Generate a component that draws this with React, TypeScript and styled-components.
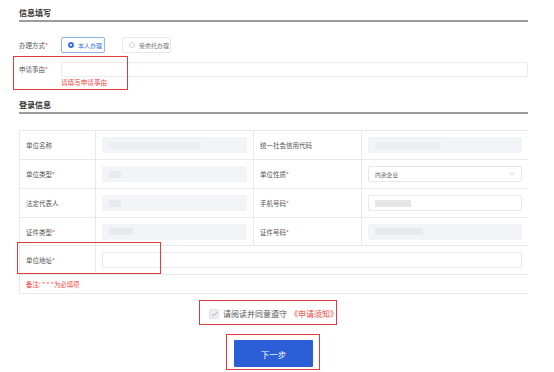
import styled, { createGlobalStyle } from "styled-components";

const GlobalStyle = createGlobalStyle`
	html, body {
		margin: 0;
		padding: 0;
		background: #fff;
		font-family: "Noto Sans CJK SC", "Noto Sans", sans-serif;
	}
`;

const Page = styled.div`
	position: relative;
	width: 554px;
	height: 372px;
	box-sizing: border-box;
	padding: 0 26px 0 19px;
	overflow: hidden;
`;
const SectionTitle = styled.div<{ $top: number }>`
	padding-top: ${(p) => p.$top}px;
	padding-bottom: 1px;
	line-height: 12px;
	font-size: 8px;
	font-weight: 700;
	color: #333;
	border-bottom: 2px solid #9b9b9b;
`;
const FormRow = styled.div<{ $mt: number }>`
	display: flex;
	align-items: center;
	margin-top: ${(p) => p.$mt}px;
	height: 16px;
`;
const FieldLabel = styled.div`
	width: 42px;
	flex: none;
	font-size: 6.5px;
	color: #555;
`;
const Star = styled.span`
	color: #f0443a;
`;
const RadioOption = styled.div<{ $active?: boolean; $w: number; $ml?: number }>`
	display: flex;
	align-items: center;
	gap: 4px;
	box-sizing: border-box;
	width: ${(p) => p.$w}px;
	height: 16px;
	margin-left: ${(p) => p.$ml || 0}px;
	padding-left: 6px;
	border: 1px solid ${(p) => (p.$active ? "#8fb2f6" : "#e8e8e8")};
	border-radius: 2px;
	font-size: 6px;
	color: ${(p) => (p.$active ? "#3a72e6" : "#777")};
`;
const RadioDot = styled.span<{ $active?: boolean }>`
	box-sizing: border-box;
	width: 6px;
	height: 6px;
	border-radius: 50%;
	border: ${(p) => (p.$active ? "2px solid #3a72e6" : "1px solid #d6d6d6")};
	background: #fff;
`;
const TextInput = styled.div`
	flex: 1;
	height: 15px;
	box-sizing: border-box;
	border: 1px solid #ececec;
	border-radius: 2px;
`;
const ErrorText = styled.div`
	margin-left: 42px;
	margin-top: 1px;
	line-height: 8px;
	font-size: 6.6px;
	color: #f0443a;
`;
const Table = styled.div`
	margin-top: 16px;
	display: grid;
	grid-template-columns: 75px 157px 107px 166px;
	grid-template-rows: 28px 28px 28px 27px 28px 18px;
	gap: 1px;
	background: #e9e9e9;
	border: 1px solid #e9e9e9;
`;
const LabelCell = styled.div`
	background: #fff;
	display: flex;
	align-items: center;
	padding-left: 6px;
	font-size: 6.5px;
	color: #555;
`;
const ValueCell = styled.div<{ $span?: number }>`
	background: #fff;
	display: flex;
	align-items: center;
	padding: 0 6px;
	grid-column: span ${(p) => p.$span || 1};
`;
const Field = styled.div<{ $disabled?: boolean }>`
	position: relative;
	flex: 1;
	height: 16px;
	box-sizing: border-box;
	display: flex;
	align-items: center;
	justify-content: space-between;
	padding: 0 6px;
	border-radius: 2px;
	border: 1px solid ${(p) => (p.$disabled ? "#f2f3f6" : "#e8e8e8")};
	background: ${(p) => (p.$disabled ? "#f3f4f7" : "#fff")};
	font-size: 5.8px;
	color: #666;
`;
const Mask = styled.span<{ $w: number; $tone?: string }>`
	width: ${(p) => p.$w}px;
	height: 7px;
	background: ${(p) => p.$tone || "#e7e9ee"};
	filter: blur(0.6px);
`;
const NoteCell = styled.div`
	grid-column: span 4;
	background: #fff;
	display: flex;
	align-items: center;
	padding-left: 6px;
	font-size: 6.4px;
	color: #f0443a;
`;
const AgreeRow = styled.div`
	margin-top: 7px;
	height: 25px;
	display: flex;
	align-items: center;
	justify-content: center;
	gap: 4px;
	font-size: 8px;
	color: #555;
`;
const CheckBox = styled.span`
	width: 10px;
	height: 10px;
	box-sizing: border-box;
	border: 1px solid #e0e2e8;
	border-radius: 2px;
	background: #eceef3;
	display: flex;
	align-items: center;
	justify-content: center;
`;
const NoticeLink = styled.span`
	color: #f0443a;
	margin-left: -1px;
`;
const ButtonRow = styled.div`
	margin-top: 14px;
	display: flex;
	justify-content: center;
`;
const NextButton = styled.button`
	width: 79px;
	height: 27px;
	border: none;
	border-radius: 1px;
	background: #2c5ed8;
	color: #fff;
	font-family: inherit;
	font-size: 8.5px;
	padding: 0;
`;
const Annotation = styled.div<{ $x: number; $y: number; $w: number; $h: number }>`
	position: absolute;
	left: ${(p) => p.$x}px;
	top: ${(p) => p.$y}px;
	width: ${(p) => p.$w}px;
	height: ${(p) => p.$h}px;
	box-sizing: border-box;
	border: 1.5px solid #e33b3b;
	pointer-events: none;
`;

function Chevron() {
	return (
		<svg width="6" height="4" viewBox="0 0 6 4">
			<path d="M0.5 0.8 L3 3.2 L5.5 0.8" fill="none" stroke="#c4c4c4" strokeWidth="0.8" />
		</svg>
	);
}

function App() {
	return (
		<>
			<GlobalStyle />
			<Page>
				<SectionTitle $top={7}>信息填写</SectionTitle>
				<FormRow $mt={15}>
					<FieldLabel>
						办理方式<Star>*</Star>
					</FieldLabel>
					<RadioOption $active $w={44}>
						<RadioDot $active />
						本人办理
					</RadioOption>
					<RadioOption $w={49} $ml={17}>
						<RadioDot />
						受委托办理
					</RadioOption>
				</FormRow>
				<FormRow $mt={8}>
					<FieldLabel>
						申请事由<Star>*</Star>
					</FieldLabel>
					<TextInput />
				</FormRow>
				<ErrorText>请填写申请事由</ErrorText>

				<SectionTitle $top={13}>登录信息</SectionTitle>
				<Table>
					<LabelCell>单位名称</LabelCell>
					<ValueCell>
						<Field $disabled>
							<Mask $w={92} $tone="#eceef2" />
						</Field>
					</ValueCell>
					<LabelCell>统一社会信用代码</LabelCell>
					<ValueCell>
						<Field $disabled>
							<Mask $w={66} $tone="#eceef2" />
						</Field>
					</ValueCell>

					<LabelCell>
						单位类型<Star>*</Star>
					</LabelCell>
					<ValueCell>
						<Field $disabled>
							<Mask $w={12} />
						</Field>
					</ValueCell>
					<LabelCell>
						单位性质<Star>*</Star>
					</LabelCell>
					<ValueCell>
						<Field>
							内资企业
							<Chevron />
						</Field>
					</ValueCell>

					<LabelCell>法定代表人</LabelCell>
					<ValueCell>
						<Field $disabled>
							<Mask $w={12} />
						</Field>
					</ValueCell>
					<LabelCell>
						手机号码<Star>*</Star>
					</LabelCell>
					<ValueCell>
						<Field>
							<Mask $w={36} $tone="#e6e6e6" />
						</Field>
					</ValueCell>

					<LabelCell>
						证件类型<Star>*</Star>
					</LabelCell>
					<ValueCell>
						<Field $disabled>
							<Mask $w={24} />
						</Field>
					</ValueCell>
					<LabelCell>
						证件号码<Star>*</Star>
					</LabelCell>
					<ValueCell>
						<Field $disabled>
							<Mask $w={48} />
						</Field>
					</ValueCell>

					<LabelCell>
						单位地址<Star>*</Star>
					</LabelCell>
					<ValueCell $span={3}>
						<Field />
					</ValueCell>

					<NoteCell>备注: " * "为必填项</NoteCell>
				</Table>

				<AgreeRow>
					<CheckBox>
						<svg width="7" height="6" viewBox="0 0 7 6">
							<path d="M0.8 3 L2.7 4.8 L6.2 1" fill="none" stroke="#a9adb6" strokeWidth="1" />
						</svg>
					</CheckBox>
					请阅读并同意遵守
					<NoticeLink>《申请须知》</NoticeLink>
				</AgreeRow>
				<ButtonRow>
					<NextButton>下一步</NextButton>
				</ButtonRow>

				<Annotation $x={13} $y={56} $w={115} $h={34} />
				<Annotation $x={17} $y={242} $w={144} $h={32} />
				<Annotation $x={199} $y={300} $w={138} $h={25} />
				<Annotation $x={226} $y={334} $w={94} $h={36} />
			</Page>
		</>
	);
}

export default App;
